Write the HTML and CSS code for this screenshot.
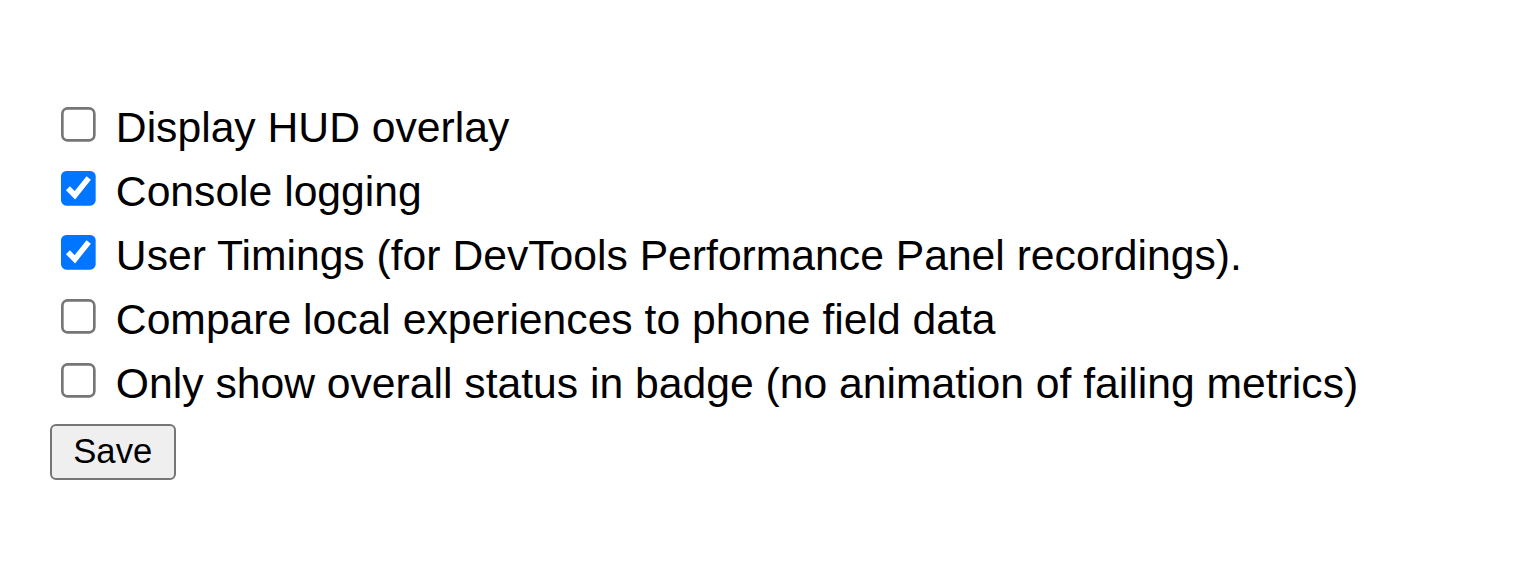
FILE: index.html
```html
<!DOCTYPE html>
<html lang="en">

<head>
    <title>Options - Web Vitals</title>
    <link rel="stylesheet" href="styles.css">
</head>

<body>
    <form id="options" class="options">
        <label class="option"><input type="checkbox" id="overlay"> Display HUD overlay</label>
        <label class="option"><input type="checkbox" id="console" checked> Console logging</label>
        <label class="option"><input type="checkbox" id="timings" checked> User Timings (for DevTools Performance Panel recordings).</label>
        <label class="option"><input type="checkbox" id="field"> Compare local experiences to phone field data</label>
        <label class="option"><input type="checkbox" id="badge"> Only show overall status in badge (no animation of failing metrics)</label>
        <button type="button" id="save" class="save">Save</button>
    </form>
</body>

</html>
```

FILE: styles.css
```css
body {
    margin: 0;
    font-family: "Liberation Sans", Arial, sans-serif;
    background-color: white;
    color: black;
}

.options {
    zoom: 2.6667;
    padding: 35.6px 19px;
    font-size: 16px;
}

.option {
    display: block;
    line-height: 24px;
}

.save {
    margin-top: 3.3px;
    margin-left: -0.3px;
    font-family: "Liberation Sans", Arial, sans-serif;
    font-size: 13px;
    height: 21px;
    padding: 1px 6.9px;
}
```
